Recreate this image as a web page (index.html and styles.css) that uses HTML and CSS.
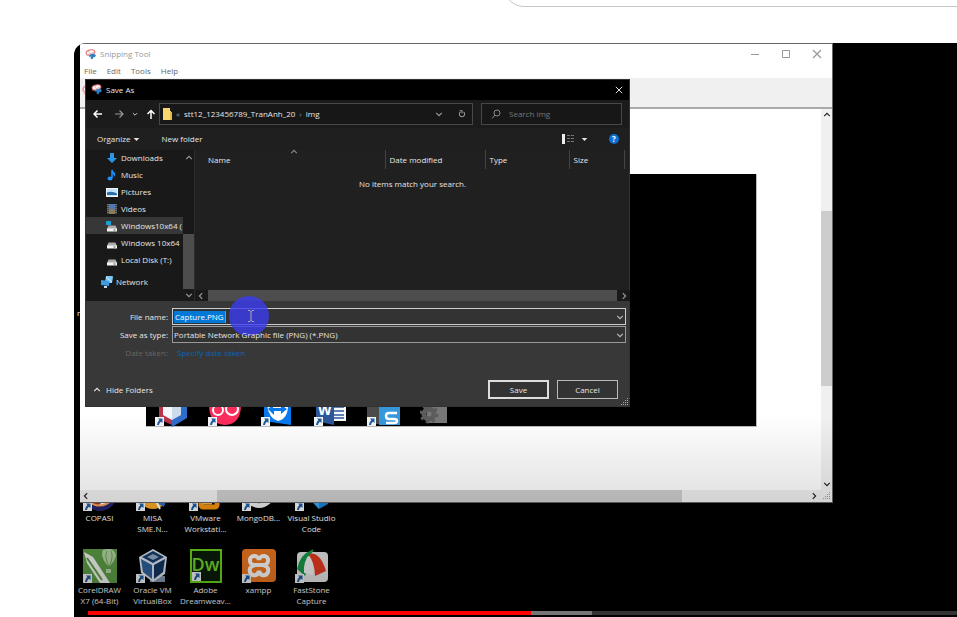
FILE: index.html
```html
<!DOCTYPE html>
<html lang="en">
<head>
<meta charset="utf-8">
<title>Video player</title>
<link rel="stylesheet" href="styles.css">
</head>
<body>
<svg class="defs" aria-hidden="true">
  <symbol id="snip" viewBox="0 0 24 22">
    <ellipse cx="11" cy="7" rx="9" ry="5" fill="#fff" stroke="#e06a6a" stroke-width="2" transform="rotate(-12 11 7)"/>
    <path d="M3 13 18 6M7 4l8 10" stroke="#d99" stroke-width="1.500"/>
    <path d="M9 12l7-3 6 3-2 4-4 1-1 4-4-2 1-4-4 1z" fill="#2e7fc4"/>
  </symbol>
  <symbol id="down" viewBox="0 0 10 10"><path d="M1.500 3.500 5 7l3.500-3.500" fill="none" stroke="currentColor" stroke-width="1.500"/></symbol>
  <symbol id="up" viewBox="0 0 10 10"><path d="M1.500 6.500 5 3l3.500 3.500" fill="none" stroke="currentColor" stroke-width="1.500"/></symbol>
  <symbol id="left" viewBox="0 0 10 10"><path d="M6.500 1.500 3 5l3.500 3.500" fill="none" stroke="currentColor" stroke-width="1.500"/></symbol>
  <symbol id="right" viewBox="0 0 10 10"><path d="M3.500 1.500 7 5 3.500 8.500" fill="none" stroke="currentColor" stroke-width="1.500"/></symbol>
  <symbol id="close" viewBox="0 0 10 10"><path d="M1 1l8 8M9 1 1 9" fill="none" stroke="currentColor" stroke-width="1.200"/></symbol>
  <symbol id="tri" viewBox="0 0 10 10"><path d="M1 3h8L5 7z" fill="currentColor"/></symbol>
  <symbol id="grip" viewBox="0 0 8 8"><path d="M6 0h1v1H6zM6 2h1v1H6zM4 2h1v1H4zM6 4h1v1H6zM4 4h1v1H4zM2 4h1v1H2zM6 6h1v1H6zM4 6h1v1H4zM2 6h1v1H2zM0 6h1v1H0z" fill="currentColor"/></symbol>
  <symbol id="drive" viewBox="0 0 12 12"><path d="M2.500 5.500h7L11 9H1z" fill="#aaa"/><path d="M1 8.500h10v3H1z" fill="#f2f2f2"/><path d="M7.500 10h2" stroke="#555"/></symbol>
  <symbol id="link" viewBox="0 0 9 9"><path d="M0 0h9v9H0z" fill="#f4f4f4"/><path d="M3 1.500h4.500V6L6 4.700Q4.200 5.800 4 8H2Q2 5 4.400 3z" fill="#1d5b9f"/></symbol>
</svg>

<header class="page-top"><div class="search-outline"></div></header>

<main class="video">
  <p class="stray-label">r</p>
  <ul class="desktop">
    <li>
      <div class="pic"><svg viewBox="0 0 34 34"><circle cx="17" cy="17" r="17" fill="#24246e"/><ellipse cx="16" cy="18" rx="13" ry="11" fill="#fff"/><path d="M5 26 27 10l3 4-16 16z" fill="#a53021"/><path d="M5 24Q18 34 30 22" fill="none" stroke="#f0a05c" stroke-width="2"/></svg><svg class="sc"><use href="#link"/></svg></div>
      <span>COPASI</span>
    </li>
    <li>
      <div class="pic"><svg viewBox="0 0 34 34"><circle cx="17" cy="16" r="16" fill="#f5a623"/><path d="M16 16h16l-4 14-7-4z" fill="#2d6fc4"/><path d="M16 16l8 16" stroke="#fff" stroke-width="2"/></svg><svg class="sc"><use href="#link"/></svg></div>
      <span>MISA<br>SME.N...</span>
    </li>
    <li>
      <div class="pic"><svg viewBox="0 0 34 34"><rect x="12" y="10" width="16" height="20" rx="2" fill="none" stroke="#f29111" stroke-width="5"/><path d="M5 6h13v20H5z" fill="#3f7fc8"/><path d="M13 26h10" stroke="#f7b04d" stroke-width="3"/></svg><svg class="sc"><use href="#link"/></svg></div>
      <span>VMware<br>Workstati...</span>
    </li>
    <li>
      <div class="pic"><svg viewBox="0 0 34 34"><circle cx="17" cy="15" r="16" fill="#e9e9e9"/><path d="M17 3q9 12 0 24-9-12 0-24" fill="#4b9b4b"/></svg><svg class="sc"><use href="#link"/></svg></div>
      <span>MongoDB...</span>
    </li>
    <li>
      <div class="pic"><svg viewBox="0 0 34 34"><path d="M12 20 24 4l9 5v18l-9 5z" fill="#1582d4"/><path d="M14 20l10 6v6z" fill="#3ba4ef"/></svg><svg class="sc"><use href="#link"/></svg></div>
      <span>Visual Studio<br>Code</span>
    </li>
    <li>
      <div class="pic"><svg viewBox="0 0 34 34"><path d="M0 0h34v34H0z" fill="#5d9e46"/><path d="M20 1q10-4 13 5-1 6-7 12-6-6-7-12 0-3 1-5" fill="#b7d7a7"/><path d="M24 2q-3 5 2 16M28 2q3 6-2 16" fill="none" stroke="#6bab53"/><path d="M23 20h5v4h-5z" fill="#b7d7a7"/><path d="M1 3l9 5 17 26H17L4 14z" fill="#f5f9f2"/><path d="M4 9l15 22" stroke="#5d9e46" stroke-width="2"/></svg><svg class="sc"><use href="#link"/></svg></div>
      <span>CorelDRAW<br>X7 (64-Bit)</span>
    </li>
    <li>
      <div class="pic"><svg viewBox="0 0 34 34"><path d="M14 27h15v6H14z" fill="#8496ad"/><path d="M17 0 31 8 29 25 17 33 5 24 3 8z" fill="#dce7f2"/><path d="M17 2 28 8 17 14 6 8z" fill="#183d6c"/><path d="M5 10l11 6v14L7 23z" fill="#2e609b"/><path d="M29 10l-11 6v14l9-7z" fill="#123560"/><path d="M17 5l6 3-6 3-6-3z" fill="#94adc8"/></svg><svg class="sc"><use href="#link"/></svg></div>
      <span>Oracle VM<br>VirtualBox</span>
    </li>
    <li>
      <div class="pic dw"><b>Dw</b><svg class="sc"><use href="#link"/></svg></div>
      <span>Adobe<br>Dreamweav...</span>
    </li>
    <li>
      <div class="pic"><svg viewBox="0 0 34 34"><rect width="34" height="33" rx="4" fill="#f07822"/><path d="M17 11C16 5 7 6 8 12c0 3 3 4 5 4-4 1-6 3-5 7 2 5 8 4 9-1 1 5 7 6 9 1 1-4-1-6-5-7 2 0 5-1 5-4 1-6-8-7-9-1M13 16h8" fill="none" stroke="#fff" stroke-width="4"/></svg><svg class="sc"><use href="#link"/></svg></div>
      <span>xampp</span>
    </li>
    <li>
      <div class="pic"><svg viewBox="0 0 34 34"><rect x="2" y="3" width="31" height="30" rx="4" fill="#e8e8e8"/><path d="M17 1Q5 5 2 20l8 7q4-10 7-26" fill="#169a4b"/><path d="M15 4q-7 9-6 20l9 2q1-14-3-22" fill="#f7f7f7"/><path d="M13 5q12-3 18 17l-11 5Q20 14 13 5" fill="#e83a20"/><path d="m12 7 6-6" stroke="#159a43" stroke-width="2"/></svg><svg class="sc"><use href="#link"/></svg></div>
      <span>FastStone<br>Capture</span>
    </li>
  </ul>

  <section class="snipping" aria-label="Snipping Tool">
    <div class="snip-title">
      <svg class="app"><use href="#snip"/></svg><span>Snipping Tool</span>
      <div class="win-buttons">
        <button aria-label="Minimize"><svg viewBox="0 0 10 10"><path d="M1 5.500h8" stroke="currentColor"/></svg></button>
        <button aria-label="Maximize"><svg viewBox="0 0 10 10"><path d="M1.500 1.500h7v7h-7z" fill="none" stroke="currentColor"/></svg></button>
        <button aria-label="Close"><svg><use href="#close"/></svg></button>
      </div>
    </div>
    <nav class="menu"><button>File</button><button>Edit</button><button>Tools</button><button>Help</button></nav>
    <div class="tools"><svg><use href="#snip"/></svg></div>
    <div class="snip-body">
      <div class="canvas">
        <div class="capture">
          <div class="cap-icon"><svg viewBox="0 0 34 22"><path d="M4 0h13v20L4 14z" fill="#b8344b"/><path d="M17 0h15v13l-15 9z" fill="#2e6dca"/><path d="M8 0h9v15L8 10z" fill="#f4f7fa"/><path d="M17 0h9v10l-9 5z" fill="#cddbea"/></svg><svg class="sc"><use href="#link"/></svg></div>
          <div class="cap-icon"><svg viewBox="0 0 34 22"><path d="M1 0h32q0 19-16 20Q1 19 1 0" fill="#fb2d5c"/><circle cx="10" cy="5" r="5" fill="none" stroke="#fff" stroke-width="2"/><circle cx="24" cy="4" r="6" fill="none" stroke="#fff" stroke-width="2"/></svg><svg class="sc"><use href="#link"/></svg></div>
          <div class="cap-icon"><svg viewBox="0 0 34 22"><path d="M3 0h27v20L3 16z" fill="#0879ec"/><path d="M6 0h21q0 14-10 16Q8 14 6 0" fill="#fff"/><path d="m7 4 5-4v3h8V0l6 4-6 5V6h-7v4z" fill="#0879ec"/></svg><svg class="sc"><use href="#link"/></svg></div>
          <div class="cap-icon word"><svg viewBox="0 0 34 22"><path d="M17 0h15v16H17z" fill="#f6f8fb"/><path d="M19 2h11M19 6h11M19 10h11M19 13h11" stroke="#2b579a" stroke-width="1.500"/><path d="M2 0h18v20L2 16z" fill="#2b579a"/></svg><b>W</b><svg class="sc"><use href="#link"/></svg></div>
          <div class="cap-icon"><svg viewBox="0 0 34 22"><path d="M0 0h12v19H0z" fill="#4b4b4b"/><path d="M12 0h21v20H12z" fill="#3498db"/><path d="M30 8h-8q-3 0-3 3t3 3h5q3 0 3 2t-3 2h-8" fill="none" stroke="#fff" stroke-width="2.500"/></svg><svg class="sc"><use href="#link"/></svg></div>
          <div class="cap-icon"><svg viewBox="0 0 34 22"><path d="M7 0h20v18H7z" fill="#777"/><circle cx="9" cy="9" r="5" fill="none" stroke="#5c5c5c" stroke-width="5"/><circle cx="9" cy="9" r="8" fill="none" stroke="#5c5c5c" stroke-width="3" stroke-dasharray="3 3.280"/></svg></div>
        </div>
      </div>
      <div class="vbar light"><svg><use href="#up"/></svg><i></i><svg><use href="#down"/></svg></div>
      <div class="hbar light"><svg><use href="#left"/></svg><i></i><svg><use href="#right"/></svg></div>
      <div class="light"><svg class="corner"><use href="#grip"/></svg></div>
    </div>
  </section>

  <form class="dialog" aria-label="Save As">
    <div class="dlg-title"><svg class="app"><use href="#snip"/></svg><span>Save As</span><button type="button" aria-label="Close"><svg><use href="#close"/></svg></button></div>
    <div class="nav-row">
      <div class="arrows">
        <button type="button" aria-label="Back"><svg viewBox="0 0 10 10"><path d="M9 5H1.500M4.500 1.500 1 5l3.500 3.500" fill="none" stroke="#fff" stroke-width="1.500"/></svg></button>
        <button type="button" aria-label="Forward"><svg viewBox="0 0 10 10"><path d="M1 5h7.500M5.500 1.500 9 5 5.500 8.500" fill="none" stroke="#999" stroke-width="1.200"/></svg></button>
        <button type="button" aria-label="Recent" class="small"><svg><use href="#down"/></svg></button>
        <button type="button" aria-label="Up"><svg viewBox="0 0 10 10"><path d="M5 10V1.500M1.500 5 5 1.500 8.500 5" fill="none" stroke="#fff" stroke-width="1.500"/></svg></button>
      </div>
      <div class="address">
        <svg class="folder" viewBox="0 0 10 12"><path d="M1 0h7v3h1v9H1z" fill="#f9d572"/><path d="M8 4h2v8H8z" fill="#e8b94c"/></svg>
        <span class="dim">«</span><span>stt12_123456789_TranAnh_20</span><span class="dim">›</span><span>img</span>
        <button type="button" aria-label="Previous locations" class="end"><svg><use href="#down"/></svg></button>
        <button type="button" aria-label="Refresh"><svg viewBox="0 0 10 10"><path d="M7 2.500A3.300 3.300 0 1 1 3 2.500M2 1h3v3" fill="none" stroke="currentColor" stroke-width="1.300"/></svg></button>
      </div>
      <label class="find"><svg viewBox="0 0 10 10"><circle cx="6" cy="4" r="3" fill="none" stroke="currentColor"/><path d="M4 6 1 9.500" stroke="currentColor"/></svg><input type="search" placeholder="Search img" aria-label="Search img"></label>
    </div>
    <div class="cmd-row">
      <button type="button">Organize <svg><use href="#tri"/></svg></button>
      <button type="button">New folder</button>
      <button type="button" class="end view" aria-label="View"><svg class="list" viewBox="0 0 12 10"><path d="M0 0h3v10H0z" fill="#eee"/><path d="M5 1.500h3M9 1.500h3M5 4.500h3M9 4.500h3M5 7.500h3M9 7.500h3" stroke="#777"/></svg><svg><use href="#tri"/></svg></button>
      <button type="button" class="help" aria-label="Help">?</button>
    </div>
    <div class="browser">
      <div class="side">
        <ul class="tree">
          <li><svg viewBox="0 0 12 12"><path d="M4 1h4v5h3l-5 5-5-5h3z" fill="#2b95e8"/></svg>Downloads</li>
          <li><svg viewBox="0 0 12 12"><path d="M6 1v8" stroke="#1e90ff" stroke-width="1.500"/><ellipse cx="4" cy="9.500" rx="2.500" ry="2" fill="#1e90ff"/><path d="M6 0q0 2 3 4 1 2-1 4 0-3-2-4z" fill="#1e90ff"/></svg>Music</li>
          <li><svg viewBox="0 0 12 12"><path d="M0 2h12v9H0z" fill="#f5f5f5"/><path d="M1 3h10v7H1z" fill="#bfe4fb"/><path d="M1 6.500q5-2 10 1V9H1z" fill="#2c6da3"/></svg>Pictures</li>
          <li><svg viewBox="0 0 12 12"><path d="M1 1h10v10H1z" fill="#444"/><path d="M3 1h6v5H3z" fill="#4a78b8"/><path d="M3 6h6v5H3z" fill="#8a7a5c"/><path d="M2 1v10M10 1v10" stroke="#999" stroke-dasharray="1 1"/></svg>Videos</li>
          <li class="on"><svg viewBox="0 0 12 12"><use href="#drive" width="12" height="12"/><path d="M0 1h5v4H0z" fill="#18a2d8"/></svg>Windows10x64 (</li>
          <li><svg><use href="#drive"/></svg>Windows 10x64</li>
          <li><svg><use href="#drive"/></svg>Local Disk (T:)</li>
          <li class="net"><svg viewBox="0 0 12 12"><path d="M5 0h6q1 0 1 1l-1 6H4z" fill="#7cc7f2"/><path d="m0 4 8 1v5l-8-1z" fill="#3d9be0"/><path d="M3 10h3v2H3z" fill="#c2d8e8"/><path d="m5 1 6 5" stroke="#c9ebff"/></svg>Network</li>
        </ul>
        <div class="vbar dark"><svg><use href="#up"/></svg><i></i><svg><use href="#down"/></svg></div>
      </div>
      <div class="files">
        <svg class="sort"><use href="#up"/></svg>
        <table>
          <thead><tr><th class="c-name">Name</th><th class="c-date">Date modified</th><th class="c-type">Type</th><th class="c-size">Size</th><th></th></tr></thead>
          <tbody><tr><td colspan="5">No items match your search.</td></tr></tbody>
        </table>
        <div class="hbar dark"><svg><use href="#left"/></svg><i></i><svg><use href="#right"/></svg></div>
      </div>
    </div>
    <div class="fields">
      <label for="fname">File name:</label>
      <div class="combo focus"><input id="fname" value="Capture.PNG"><svg><use href="#down"/></svg></div>
      <label for="ftype">Save as type:</label>
      <div class="combo"><select id="ftype"><option>Portable Network Graphic file (PNG) (*.PNG)</option></select><svg><use href="#down"/></svg></div>
      <span class="muted">Date taken:</span>
      <a href="#">Specify date taken</a>
    </div>
    <div class="actions">
      <button type="button" class="hide"><svg><use href="#up"/></svg>Hide Folders</button>
      <button type="submit" class="btn primary">Save</button>
      <button type="button" class="btn">Cancel</button>
    </div>
    <svg class="dlg-grip"><use href="#grip"/></svg>
    <div class="pointer"><svg viewBox="0 0 8 12"><path d="M1 .5h2l1 1 1-1h2M4 1v10M1 11.500h2l1-1 1 1h2" fill="none" stroke="#aaa"/></svg></div>
  </form>

  <div class="shade"></div>
  <div class="progress"><div class="played"></div><div class="loaded"></div></div>
</main>
</body>
</html>
```
FILE: styles.css
```css
* { box-sizing: border-box; }
body {
  margin: 0;
  min-height: 100vh;
  display: flex;
  flex-direction: column;
  overflow: hidden;
  background: #fff;
  font: 8px/12px "Open Sans", "Noto Sans", sans-serif;
}
svg { display: block; width: 10px; height: 10px; flex: none; }
.defs { position: absolute; width: 0; height: 0; }
button { display: flex; align-items: center; padding: 0; border: 0; background: none; color: inherit; font: inherit; }
input, select { font: inherit; color: inherit; border: 0; padding: 0; margin: 0; background: none; outline: 0; appearance: none; }
ul { margin: 0; padding: 0; list-style: none; }
.end { margin-left: auto; }

.page-top { height: 43px; overflow: hidden; }
.search-outline { height: 40px; margin: -33px -40px 0 504px; border: 1px solid #c6c6c6; border-radius: 20px; }

.video {
  flex: 1;
  position: relative;
  margin-left: 74px;
  overflow: hidden;
  border-top-left-radius: 12px;
  background: #000;
  color: #fff;
}
.stray-label { position: absolute; left: 3px; top: 264px; margin: 0; }

.desktop {
  display: grid;
  grid-template: 72px 66px / repeat(5, 53px);
  margin-left: -1px;
  padding-top: 434px;
}
.desktop li { display: flex; flex-direction: column; align-items: center; text-align: center; line-height: 11px; }
.desktop span { margin-top: 1px; }
.pic { position: relative; width: 34px; height: 34px; }
.pic > svg:first-child { width: 34px; height: 34px; }
.pic .sc, .cap-icon .sc { position: absolute; left: 0; bottom: 0; width: 9px; height: 9px; }
.dw { width: 32px; border: 2px solid #6bd419; background: #0a1d09; color: #73d82a; font-size: 18px; line-height: 27px; }
.dw b { font-weight: 600; }

.snipping {
  position: absolute;
  left: 6px;
  top: 0;
  width: 753px;
  height: 460px;
  display: flex;
  flex-direction: column;
  border: solid #666;
  border-width: 1px 1px 1px 0;
  background: #fff;
  color: #666;
}
.snip-title { display: flex; align-items: center; gap: 3px; height: 20px; padding: 0 10px 0 5px; color: #999; }
.app { width: 12px; height: 11px; }
.win-buttons { display: flex; gap: 21px; margin-left: auto; }
.menu { display: flex; gap: 10px; height: 13px; padding-left: 4px; margin-bottom: 1px; }
.tools { height: 29px; background: #f0f0f0; overflow: hidden; }
.tools svg { width: 22px; height: 20px; margin: 4px 0 0 1px; opacity: .6; }
.snip-body {
  flex: 1;
  display: grid;
  grid-template: 1fr 12px / 1fr 11px;
  border-top: 2px solid #aaa;
}
.canvas { padding: 65px 0 0 66px; }
.capture {
  display: flex;
  align-items: flex-end;
  gap: 19px;
  width: 611px;
  height: 253px;
  padding-left: 9px;
  border: 1px solid #bbb;
  border-width: 0 1px 1px 0;
  background: #000;
}
.cap-icon { position: relative; width: 34px; height: 21px; }
.cap-icon > svg:first-child { width: 34px; height: 22px; }
.word b { position: absolute; left: 4px; top: -1px; color: #fff; font-size: 14px; }

.vbar { display: flex; flex-direction: column; align-items: center; }
.hbar { display: flex; align-items: center; }
.vbar svg, .hbar svg { width: 8px; height: 8px; }
.light { background: #f0f0f0; color: #222; }
.light i { background: #cdcdcd; }
.vbar.light { padding: 2px 0; }
.vbar.light i { width: 11px; height: 175px; margin: 92px 0 auto; }
.hbar.light { padding: 0 3px 0 2px; }
.hbar.light i { width: 465px; height: 12px; margin: 0 auto 0 127px; }
.light .corner { width: 8px; height: 8px; margin: 2px; color: #999; }

.dialog {
  position: absolute;
  left: 11px;
  top: 36px;
  width: 545px;
  height: 328px;
  display: flex;
  flex-direction: column;
  outline: 1px solid #333;
  outline-offset: -1px;
  background: #383838;
  color: #e6e6e6;
}
.dlg-title { display: flex; align-items: center; gap: 3px; height: 21px; padding: 0 7px 0 6px; background: #000; }
.dlg-title button { margin-left: auto; }
.dlg-title button svg { width: 8px; height: 8px; }
.nav-row { display: flex; align-items: center; gap: 8px; height: 28px; padding: 0 8px; background: #1b1b1b; }
.arrows { display: flex; align-items: center; gap: 11px; width: 58px; color: #ddd; }
.arrows .small { margin: 0 -3px; }
.arrows .small svg { width: 6px; height: 8px; }
.address, .find { display: flex; align-items: center; height: 22px; border: 1px solid #484848; background: #171717; }
.address { flex: 1; gap: 4px; padding: 0 6px 0 2px; }
.address .end { margin-right: 11px; }
.address button { color: #999; }
.address button svg { width: 8px; height: 8px; }
.folder { width: 10px; height: 12px; }
.dim { color: #999; }
.find { width: 141px; gap: 8px; padding-left: 9px; color: #888; }
.find input { width: 100px; }
.find input::placeholder { color: #777; }
.cmd-row { display: flex; align-items: center; gap: 21px; height: 22px; padding: 0 11px 0 12px; background: #1f1f1f; }
.cmd-row button svg { width: 7px; height: 7px; margin-left: 3px; }
.cmd-row .view .list { width: 12px; height: 10px; margin-right: 4px; }
.cmd-row .help { justify-content: center; width: 10px; height: 10px; border-radius: 50%; background: #0b6fd6; color: #fff; font-weight: 700; }

.browser { display: flex; height: 151px; background: #202020; }
.side { display: flex; width: 110px; background: #191919; border-right: 1px solid #2b2b2b; }
.tree { display: grid; grid-template-rows: repeat(7, 1fr) 27px; flex: 1; padding-bottom: 6px; overflow: hidden; }
.tree li { display: flex; align-items: center; gap: 3px; padding-left: 21px; white-space: nowrap; }
.tree svg { width: 12px; height: 12px; }
.tree .on { background: #373737; }
.tree .net { padding-left: 16px; }
.dark { color: #999; background: #191919; }
.dark i { background: #4d4d4d; }
.vbar.dark { width: 11px; padding: 4px 0 2px; justify-content: space-between; }
.vbar.dark i { width: 11px; height: 55px; margin: auto 0 2px; }
.files { position: relative; flex: 1; display: flex; flex-direction: column; }
.sort { position: absolute; left: 95px; top: -2px; width: 8px; height: 8px; color: #888; }
table { width: 100%; border-collapse: collapse; table-layout: fixed; }
th { height: 19px; padding: 0 0 0 4px; text-align: left; font-weight: 400; border-right: 1px solid #444; }
th:last-child { border: 0; }
.c-name { width: 190px; padding-left: 13px; }
.c-date { width: 100px; }
.c-type { width: 84px; }
.c-size { width: 55px; }
td { height: 30px; padding: 0; text-align: center; }
.hbar.dark { height: 11px; margin-top: auto; padding: 0 2px; justify-content: space-between; }
.hbar.dark i { flex: 1; height: 11px; margin: 0 3px; }

.fields {
  display: grid;
  grid-template-columns: 83px 1fr;
  gap: 1px 4px;
  padding: 7px 4px 0 0;
}
.fields label, .muted { text-align: right; line-height: 17px; }
.combo { display: flex; align-items: center; justify-content: space-between; height: 17px; padding: 0 1px; border: 1px solid #999; background: #333; }
.combo svg { width: 8px; height: 8px; color: #bbb; }
.focus { border-color: #ccc; }
.combo input { field-sizing: content; height: 12px; padding: 0 1px; border-right: 1px solid #d98032; background: #0078d7; color: #fff; }
.combo select { position: relative; z-index: 1; flex: 1; line-height: 12px; }
.muted { color: #666; }
.fields a { margin-left: 5px; color: #0a64b8; line-height: 17px; text-decoration: none; }
.actions { display: flex; align-items: center; gap: 8px; margin-top: auto; padding: 0 12px 8px 8px; }
.hide { margin-right: auto; gap: 5px; }
.hide svg { width: 8px; height: 8px; }
.btn { justify-content: center; width: 61px; height: 19px; border: 1px solid #bbb; background: #333; }
.primary { border: 2px solid #ddd; }
.dlg-grip { position: absolute; right: 1px; bottom: 1px; width: 8px; height: 8px; color: #aaa; }
.pointer {
  position: absolute;
  left: 144px;
  top: 217px;
  display: grid;
  place-items: center;
  width: 40px;
  height: 40px;
  border-radius: 50%;
  background: rgb(60 60 240 / .8);
}
.pointer svg { width: 8px; height: 12px; margin-left: 4px; }

.shade { position: absolute; inset: 372px 0 0; background: linear-gradient(rgb(0 0 0 / 0), rgb(0 0 0 / .28)); pointer-events: none; }
.progress { position: absolute; left: 14px; right: 0; bottom: 2px; display: flex; height: 4px; background: #333; }
.played { width: 51%; background: #f00; }
.loaded { width: 7%; background: #777; }
```
